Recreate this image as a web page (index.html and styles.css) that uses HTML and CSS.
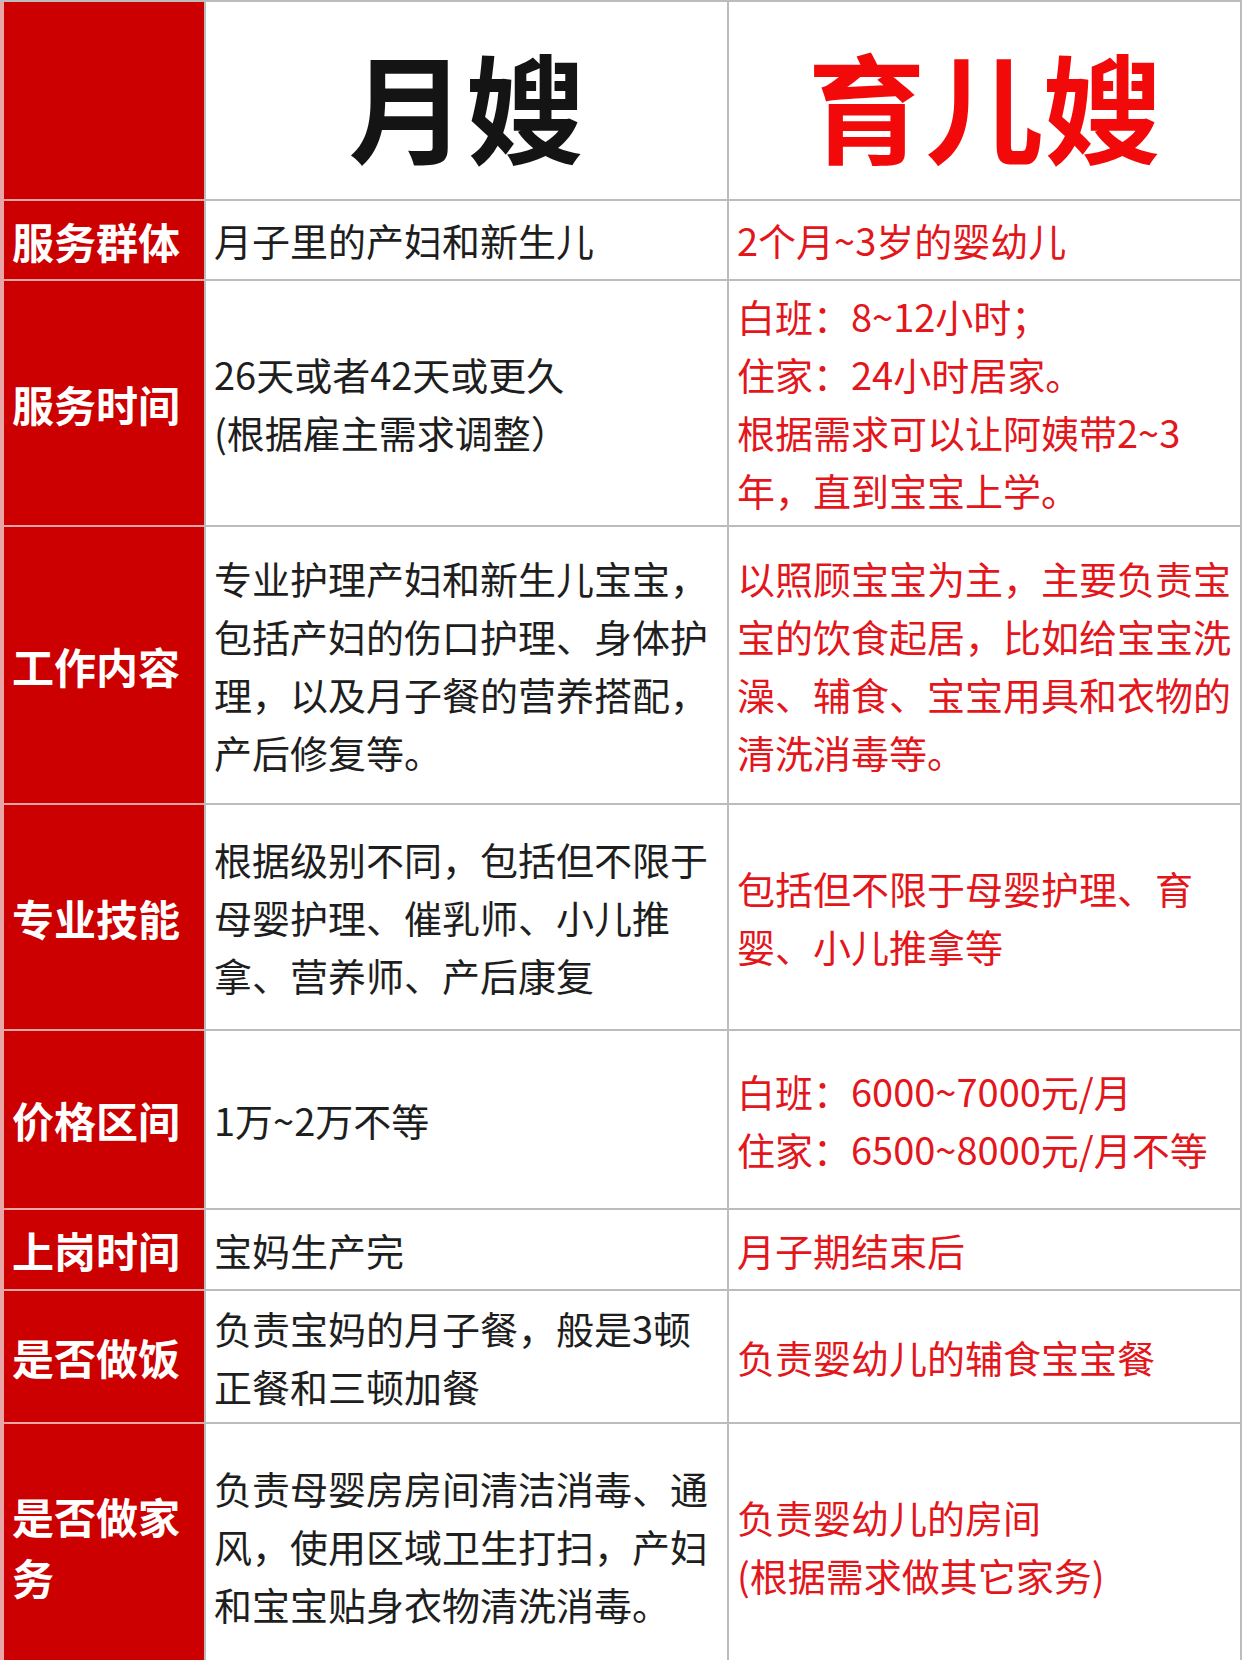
FILE: index.html
```html
<!DOCTYPE html>
<html lang="zh-CN">
<head>
<meta charset="utf-8">
<title>月嫂 vs 育儿嫂</title>
<link rel="stylesheet" href="styles.css">
</head>
<body>
<div class="table">
  <div class="label head-label"></div>
  <div class="cell head head-a">月嫂</div>
  <div class="cell head head-b">育儿嫂</div>

  <div class="label">服务群体</div>
  <div class="cell">月子里的产妇和新生儿</div>
  <div class="cell red">2个月~3岁的婴幼儿</div>

  <div class="label">服务时间</div>
  <div class="cell">26天或者42天或更久<br>(根据雇主需求调整）</div>
  <div class="cell red">白班：8~12小时；<br>住家：24小时居家。<br>根据需求可以让阿姨带2~3<br>年，直到宝宝上学。</div>

  <div class="label">工作内容</div>
  <div class="cell">专业护理产妇和新生儿宝宝，<br>包括产妇的伤口护理、身体护<br>理，以及月子餐的营养搭配，<br>产后修复等。</div>
  <div class="cell red">以照顾宝宝为主，主要负责宝<br>宝的饮食起居，比如给宝宝洗<br>澡、辅食、宝宝用具和衣物的<br>清洗消毒等。</div>

  <div class="label">专业技能</div>
  <div class="cell">根据级别不同，包括但不限于<br>母婴护理、催乳师、小儿推<br>拿、营养师、产后康复</div>
  <div class="cell red">包括但不限于母婴护理、育<br>婴、小儿推拿等</div>

  <div class="label">价格区间</div>
  <div class="cell">1万~2万不等</div>
  <div class="cell red">白班：6000~7000元/月<br>住家：6500~8000元/月不等</div>

  <div class="label">上岗时间</div>
  <div class="cell">宝妈生产完</div>
  <div class="cell red">月子期结束后</div>

  <div class="label">是否做饭</div>
  <div class="cell">负责宝妈的月子餐，般是3顿<br>正餐和三顿加餐</div>
  <div class="cell red">负责婴幼儿的辅食宝宝餐</div>

  <div class="label">是否做家<br>务</div>
  <div class="cell">负责母婴房房间清洁消毒、通<br>风，使用区域卫生打扫，产妇<br>和宝宝贴身衣物清洗消毒。</div>
  <div class="cell red">负责婴幼儿的房间<br>(根据需求做其它家务)</div>
</div>
</body>
</html>
```

FILE: styles.css
```css
html, body {
  margin: 0;
  padding: 0;
  background: #ffffff;
}

body {
  width: 1242px;
  height: 1660px;
  overflow: hidden;
  font-family: "Noto Sans CJK SC", "Noto Sans", sans-serif;
}

.table {
  display: grid;
  grid-template-columns: 200px 521px 511px;
  grid-template-rows: 197px 78px 244px 276px 224px 177px 79px 131px 244px;
  gap: 2px;
  padding: 0 2px 0 4px;
  border-top: 2px solid #bcbcbc;
  background: linear-gradient(to right, #eaa6a6 0, #eaa6a6 204px, #bcbcbc 204px, #bcbcbc 100%);
}

.label {
  background: #cc0000;
  color: #ffffff;
  font-weight: 700;
  font-size: 42px;
  line-height: 61px;
  display: flex;
  align-items: center;
  padding: 0 6px 0 8px;
}

.cell {
  background: #ffffff;
  color: #1e1e1e;
  font-size: 38px;
  line-height: 58px;
  display: flex;
  align-items: center;
  padding: 0 8px;
  white-space: nowrap;
}

.cell.red {
  color: #e3161c;
}

.head {
  justify-content: center;
  font-size: 118px;
  font-weight: 700;
  line-height: 1;
  padding: 6px 0 0 0;
}

.head-a {
  color: #141414;
}

.head-b {
  color: #f20a0a;
}
```
